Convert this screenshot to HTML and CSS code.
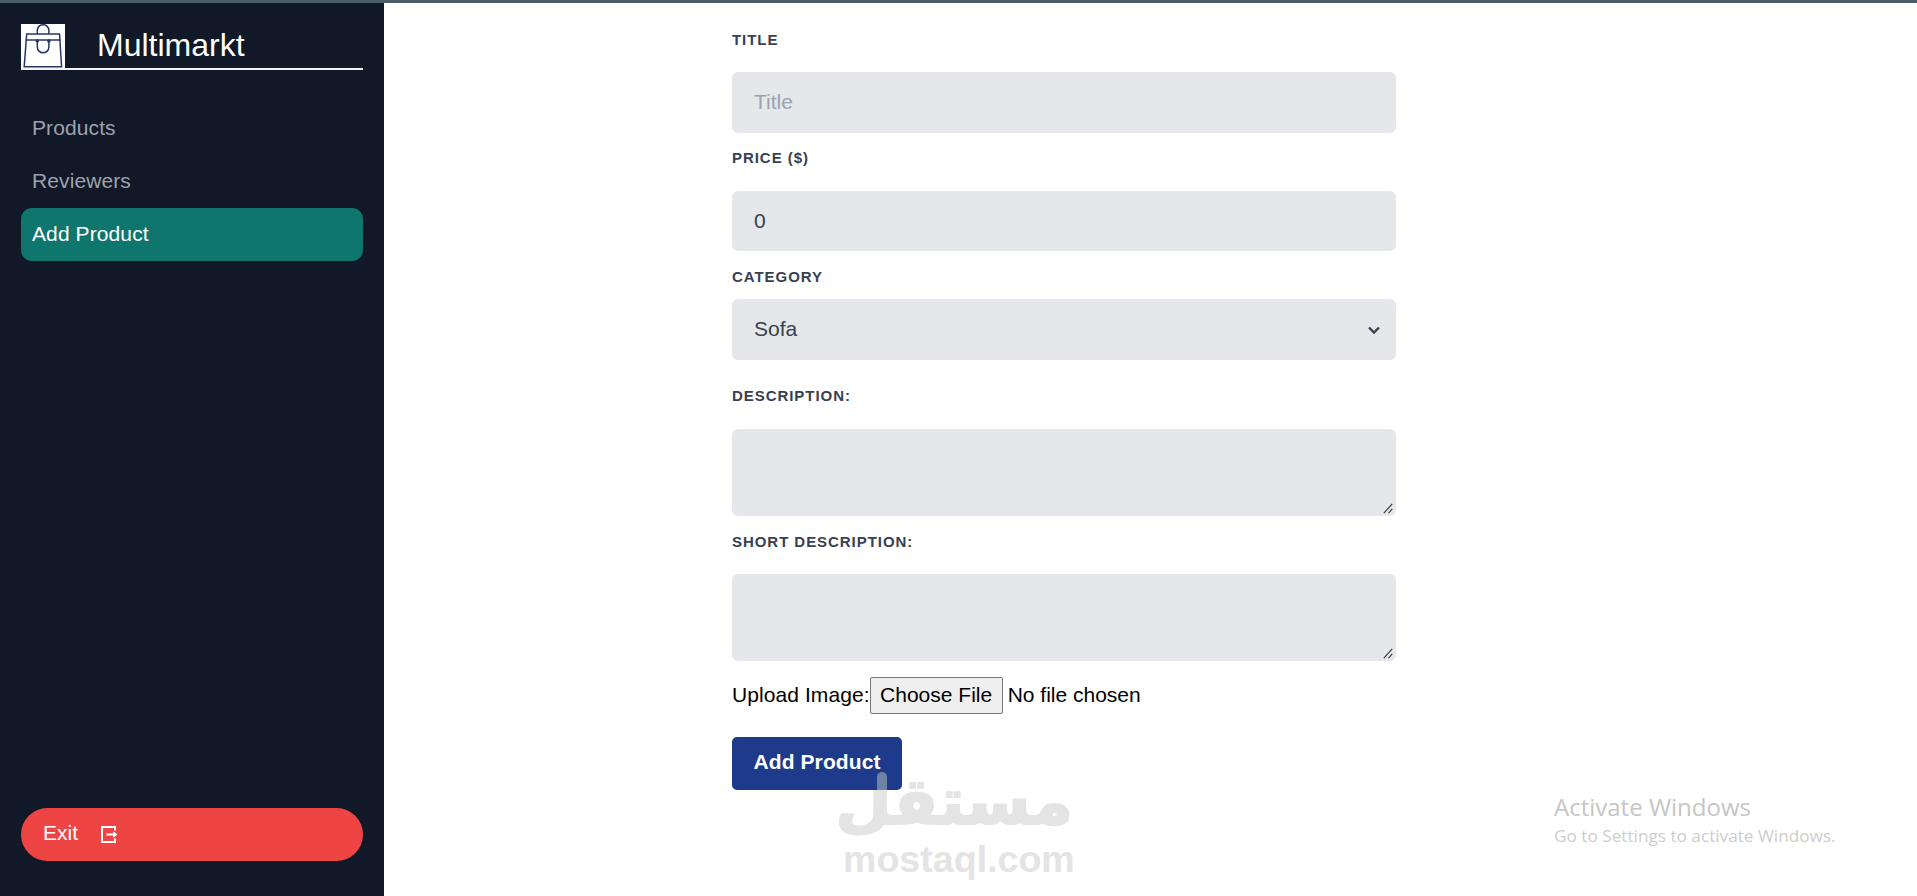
FILE: index.html
```html
<!DOCTYPE html>
<html lang="en">
<head>
<meta charset="utf-8">
<title>Multimarkt</title>
<link rel="stylesheet" href="styles.css">
</head>
<body>
<div class="topline"></div>
<div class="app">
  <aside class="sidebar">
    <div class="brand">
      <span class="logo">
        <svg viewBox="0 0 44 44" width="44" height="44" fill="none" stroke="#27375f" stroke-width="1.5">
          <path d="M16.3 10V6.5a5.8 5.8 0 0 1 11.6 0V10"/>
          <path d="M5.7 10H38.5L40.6 42.7H3.2Z"/>
          <path d="M4.6 16H39.5"/>
          <path d="M16.3 17V23a5.8 5.8 0 0 0 11.6 0V17"/>
          <circle cx="16.3" cy="17" r="1" fill="#27375f"/>
          <circle cx="27.9" cy="17" r="1" fill="#27375f"/>
        </svg>
      </span>
      <span class="brand-name">Multimarkt</span>
    </div>
    <nav class="nav">
      <a class="nav-item">Products</a>
      <a class="nav-item">Reviewers</a>
      <a class="nav-item nav-item-active">Add Product</a>
    </nav>
    <button class="exit" type="button">
      <span class="exit-label">Exit</span>
      <svg class="exit-icon" viewBox="0 0 17 17" width="17" height="17" fill="none" stroke="#fff" stroke-width="2">
        <path d="M14 4.5V1H1V16H14V12.5"/>
        <path d="M5.5 8.5H15"/>
        <path d="M12.5 6L16 8.5L12.5 11Z" fill="#fff" stroke-width="1"/>
      </svg>
    </button>
  </aside>
  <main class="main">
    <form class="form">
      <label class="label label-title" for="title">Title</label>
      <input class="control control-a" id="title" type="text" placeholder="Title">
      <label class="label label-price" for="price">Price ($)</label>
      <input class="control control-b" id="price" type="text" value="0">
      <label class="label label-category" for="category">Category</label>
      <select class="control control-a select" id="category"><option>Sofa</option></select>
      <label class="label label-description" for="description">Description:</label>
      <textarea class="control area" id="description"></textarea>
      <label class="label label-short" for="short">Short Description:</label>
      <textarea class="control area" id="short"></textarea>
      <div class="upload"><label class="upload-label" for="image">Upload Image:</label><input class="file" id="image" type="file"></div>
      <button class="submit" type="button">Add Product</button>
    </form>
  </main>
</div>
<div class="watermark">
  <div class="wm-ar" lang="ar" dir="rtl">مستقل</div>
  <div class="wm-en">mostaql.com</div>
</div>
<div class="wm-tip"></div>
<div class="activate">
  <div class="activate-title">Activate Windows</div>
  <div class="activate-sub">Go to Settings to activate Windows.</div>
</div>
</body>
</html>
```
FILE: styles.css
```css
* { box-sizing: border-box; }
html { background: #fff; }
html, body { margin: 0; height: 896px; overflow: hidden; }
body { font-family: "Liberation Sans", Arial, sans-serif; position: relative; }
.topline { height: 3px; background: #4a5d6b; }
.app { display: flex; height: 893px; }

.sidebar { width: 384px; flex: none; background: #111827; padding: 21px 21px 35px; display: flex; flex-direction: column; }
.brand { display: flex; align-items: center; height: 46px; border-bottom: 2px solid #f3f4f6; }
.logo { width: 44px; height: 44px; background: #fff; display: block; flex: none; }
.logo svg { display: block; }
.brand-name { margin-left: 32px; font-size: 32px; line-height: 42px; height: 44px; color: #fff; }
.nav { display: flex; flex-direction: column; margin-top: 32px; flex: 1; }
.nav-item { height: 53px; line-height: 51px; padding-left: 11px; font-size: 21px; letter-spacing: 0.1px; color: #9ca3af; border-radius: 11px; }
.nav-item-active { background: #0f766e; color: #fff; }
.exit { height: 53px; border: 0; border-radius: 27px; background: #ef4444; color: #fff; font: 21px "Liberation Sans", Arial, sans-serif; display: flex; align-items: center; padding: 0 0 0 22px; }
.exit-label { margin-top: -4px; }
.exit-icon { margin-left: 23px; }

.main { flex: 1; padding-left: 348px; }
.form { width: 664px; display: flex; flex-direction: column; align-items: flex-start; }
.label { display: block; height: 20px; line-height: 20px; font-size: 15px; font-weight: 700; color: #374151; text-transform: uppercase; letter-spacing: 0.95px; }
.label-title { margin: 27px 0 22px; }
.label-price { margin: 15px 0 23px; }
.label-category { margin: 16px 0 12px; }
.label-description { margin: 26px 0 23px; }
.label-short { margin: 16px 0 22px; }
.control { display: block; width: 664px; border: 0; outline: 0; margin: 0; background-color: #e5e7eb; border-radius: 6px; padding: 0 22px 2px; font: 21px "Liberation Sans", Arial, sans-serif; color: #374151; }
.control::placeholder { color: #9ca3af; opacity: 1; }
.control-a { height: 61px; }
.control-b { height: 60px; padding-bottom: 0; }
.select { appearance: none; -webkit-appearance: none; background-image: url("data:image/svg+xml,%3Csvg xmlns='http://www.w3.org/2000/svg' viewBox='0 0 12 8'%3E%3Cpath d='M1 1.5l5 5 5-5' fill='none' stroke='%23374151' stroke-width='2.4'/%3E%3C/svg%3E"); background-repeat: no-repeat; background-position: right 16px center; background-size: 12px 8px; }
.area { height: 87px; padding: 10px 22px; resize: vertical; }
.area::-webkit-resizer { background: url("data:image/svg+xml,%3Csvg xmlns='http://www.w3.org/2000/svg' viewBox='0 0 16 16'%3E%3Cpath d='M3 13L12 3M8 13L12 8.5' fill='none' stroke='%23333' stroke-width='1.2'/%3E%3C/svg%3E") no-repeat; }
.upload { display: flex; align-items: center; height: 37px; margin-top: 16px; font-size: 21px; color: #000; }
.upload-label { margin-top: -2px; letter-spacing: 0.08px; }
.file { font: 21px "Liberation Sans", Arial, sans-serif; color: #000; margin-top: -1px; }
.file::file-selector-button { height: 37px; width: 133px; padding: 0 0 1px; margin-right: 5px; border: 1px solid #767676; border-radius: 2px; background: #efefef; color: #000; font: 21px "Liberation Sans", Arial, sans-serif; }
.submit { margin-top: 23px; width: 170px; height: 53px; border: 0; border-radius: 5px; background: #1e3a8a; color: #fff; font: 700 21px "Liberation Sans", Arial, sans-serif; letter-spacing: 0.1px; padding: 0 0 4px; }

.watermark { position: absolute; z-index: -1; left: 843px; top: 772px; width: 230px; color: #e4e4e4; text-align: center; pointer-events: none; }
.wm-ar { font: 700 65px/60px "DejaVu Sans", sans-serif; height: 65px; white-space: nowrap; -webkit-text-stroke: 2px #e4e4e4; }
.wm-en { font: 700 37.6px/42px "Liberation Sans", Arial, sans-serif; margin-top: 1px; white-space: nowrap; }
.wm-tip { position: absolute; left: 877px; top: 772px; width: 10px; height: 18px; background: #6f83a3; border-radius: 5px 5px 0 0; }
.activate { position: absolute; left: 1554px; top: 790px; font-family: "Open Sans", sans-serif; pointer-events: none; }
.activate-title { font-size: 24px; line-height: 34px; color: #c6c6c6; }
.activate-sub { font-size: 17.2px; line-height: 24px; color: #cdcdcd; }
```
